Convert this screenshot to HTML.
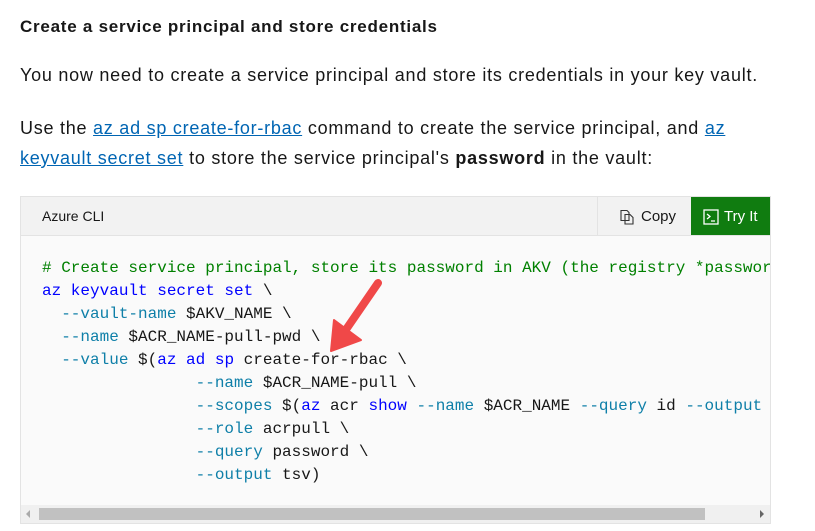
<!DOCTYPE html>
<html><head><style>
body{margin:0;width:815px;height:531px;background:#fff;font-family:"Liberation Sans",sans-serif;color:#171717;position:relative;overflow:hidden}
.h{position:absolute;left:20px;top:17px;font-size:17px;font-weight:bold;color:#171717;letter-spacing:0.75px}
.p{position:absolute;left:20px;font-size:18px;letter-spacing:0.75px;white-space:nowrap}
a{color:#0065b3;text-decoration:underline}
.box{position:absolute;left:20px;top:196px;width:749px;height:326px;border:1px solid #e3e3e3;background:#fafafa}
.hdr{position:absolute;left:0;top:0;width:749px;height:38px;background:#f2f2f2;border-bottom:1px solid #e3e3e3}
.lang{position:absolute;left:21px;top:11px;font-size:14px;color:#171717}
.copy{position:absolute;left:576px;top:0;width:94px;height:38px;border-left:1px solid #e3e3e3;font-size:15px;line-height:40px}
.try{position:absolute;left:670px;top:0;width:79px;height:38px;background:#107c10;color:#fff;font-size:15px;line-height:40px}
pre{position:absolute;left:21px;top:60px;margin:0;font-family:"Liberation Mono",monospace;font-size:16px;line-height:23px;color:#171717;width:728px;overflow:hidden}
.c{color:#008000}.k{color:#0000ff}.v{color:#0e7fa8}
.sb{position:absolute;left:0;top:308px;width:749px;height:18px;background:#f0f0f0}
.th{position:absolute;left:18px;top:3px;width:666px;height:12px;background:#c1c1c1}
</style></head><body>
<div class="h">Create a service principal and store credentials</div>
<div class="p" style="top:65px">You now need to create a service principal and store its credentials in your key vault.</div>
<div class="p" style="top:118px">Use the <a>az ad sp create-for-rbac</a> command to create the service principal, and <a>az</a></div>
<div class="p" style="top:148px"><a>keyvault secret set</a> to store the service principal's <b>password</b> in the vault:</div>
<div class="box">
<div class="hdr"><div class="lang">Azure CLI</div>
<div class="copy"><svg style="position:absolute;left:21px;top:12px" width="16" height="16" viewBox="0 0 16 16" fill="none" stroke="#333" stroke-width="1.1"><path d="M2 1.5h6l2 2v8H2z"/><path d="M6 5.5h5l3 3v6.5H6z"/></svg><span style="position:absolute;left:43px">Copy</span></div>
<div class="try"><svg style="position:absolute;left:12px;top:12px" width="16" height="16" viewBox="0 0 16 16" fill="none" stroke="#fff" stroke-width="1.3"><rect x="1" y="1" width="14" height="14"/><path d="M4 5l3 2.5L4 10M8 12h4"/></svg><span style="position:absolute;left:33px">Try It</span></div>
</div>
<pre><span class="c"># Create service principal, store its password in AKV (the registry *password</span>
<span class="k">az keyvault secret set</span> \
  <span class="v">--vault-name</span> $AKV_NAME \
  <span class="v">--name</span> $ACR_NAME-pull-pwd \
  <span class="v">--value</span> $(<span class="k">az ad sp</span> create-for-rbac \
                <span class="v">--name</span> $ACR_NAME-pull \
                <span class="v">--scopes</span> $(<span class="k">az</span> acr <span class="k">show</span> <span class="v">--name</span> $ACR_NAME <span class="v">--query</span> id <span class="v">--output</span> tsv) \
                <span class="v">--role</span> acrpull \
                <span class="v">--query</span> password \
                <span class="v">--output</span> tsv)</pre>
<div class="sb"><div class="th"></div>
<svg style="position:absolute;left:5px;top:5px" width="5" height="8"><path d="M4 0L0 4L4 8z" fill="#aaa"/></svg>
<svg style="position:absolute;left:739px;top:5px" width="5" height="8"><path d="M0 0L4 4L0 8z" fill="#666"/></svg></div>
</div>
<svg style="position:absolute;left:0;top:0" width="815" height="531"><path d="M378 283L345 331" stroke="#f04848" stroke-width="8" stroke-linecap="round"/><path d="M331 351L334 320L361 340z" fill="#f04848" stroke="#f04848" stroke-width="2" stroke-linejoin="round"/></svg>
</body></html>
